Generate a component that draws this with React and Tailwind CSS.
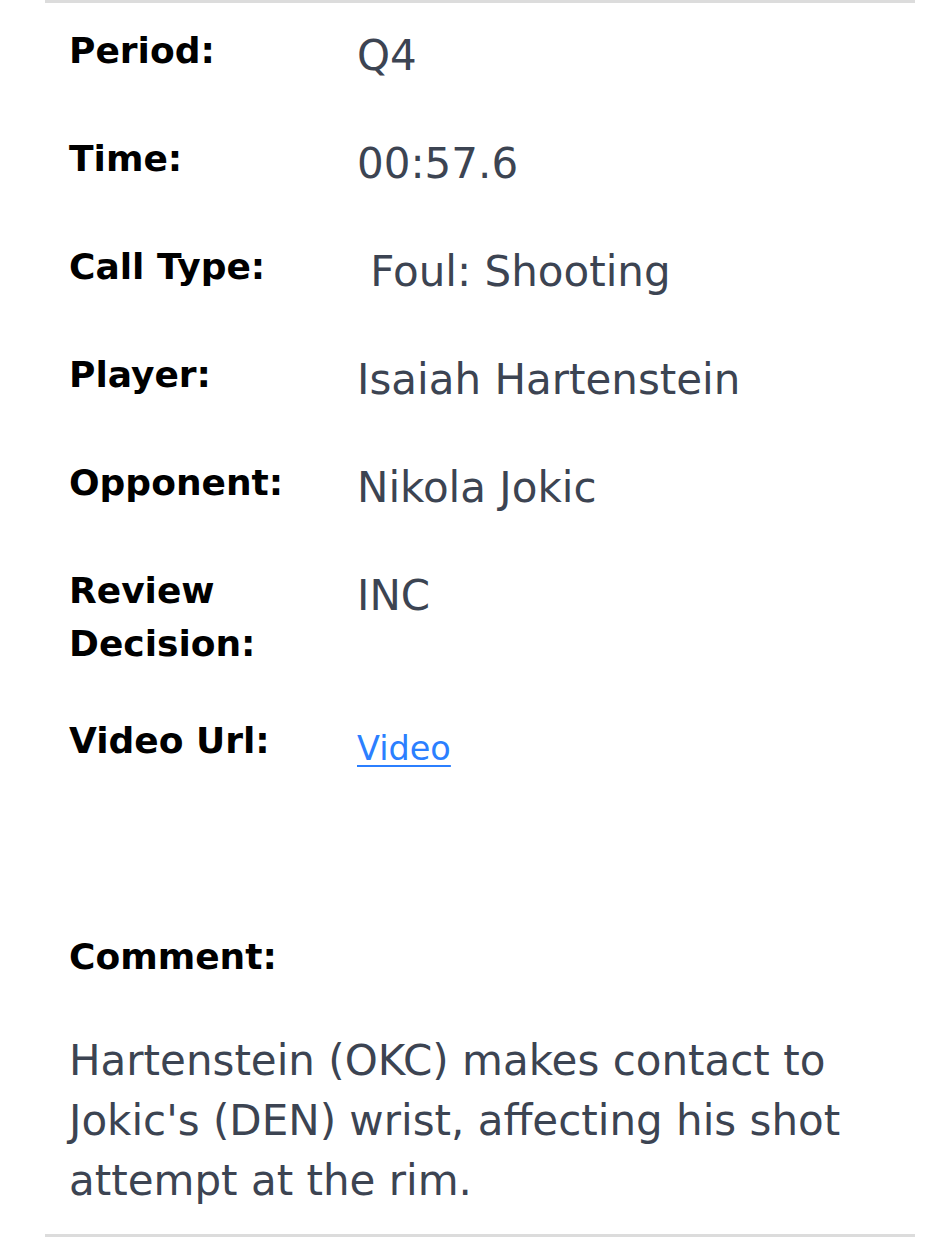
export default function App() {
  const rows = [
    { label: "Period:", value: "Q4" },
    { label: "Time:", value: "00:57.6" },
    { label: "Call Type:", value: "\u00a0Foul: Shooting" },
    { label: "Player:", value: "Isaiah Hartenstein" },
    { label: "Opponent:", value: "Nikola Jokic" },
    { label: ["Review", "Decision:"], value: "INC" },
  ];
  const font = { fontFamily: '"DejaVu Sans", sans-serif' };
  return (
    <div className="bg-white w-[933px] min-h-[1247px]" style={font}>
      <div className="ml-[45px] w-[870px] border-t-[3px] border-b-[3px] border-[#dcdcdc] pl-[24px] pr-[24px]">
        {rows.map((r, i) => (
          <div key={i} className="flex pt-[21px] pb-[23px]">
            <div className="w-[288px] shrink-0 text-[36px] leading-[53px] font-bold text-black">
              {Array.isArray(r.label) ? (
                <>
                  {r.label[0]}
                  <br />
                  {r.label[1]}
                </>
              ) : (
                r.label
              )}
            </div>
            <div className="text-[42px] leading-[60px] pt-[2px] pb-[2px] text-[#3c4452] whitespace-pre">
              {r.value}
            </div>
          </div>
        ))}
        <div className="flex pt-[21px] pb-[23px]">
          <div className="w-[288px] shrink-0 text-[36px] leading-[53px] font-bold text-black">
            Video Url:
          </div>
          <div className="h-[64px] pt-[9px]">
            <a
              href="#"
              className="text-[33.5px] leading-[52px] text-[#2b7fff] underline decoration-[2px] underline-offset-[5px]"
            >
              Video
            </a>
          </div>
        </div>
        <div className="h-[108px]" />
        <div className="pt-[21px]">
          <div className="text-[36px] leading-[53px] font-bold text-black">
            Comment:
          </div>
          <p className="mt-[48px] pb-[23px] text-[42px] leading-[60px] text-[#3c4452]">
            Hartenstein (OKC) makes contact to Jokic's (DEN) wrist, affecting his shot attempt at the rim.
          </p>
        </div>
      </div>
    </div>
  );
}
